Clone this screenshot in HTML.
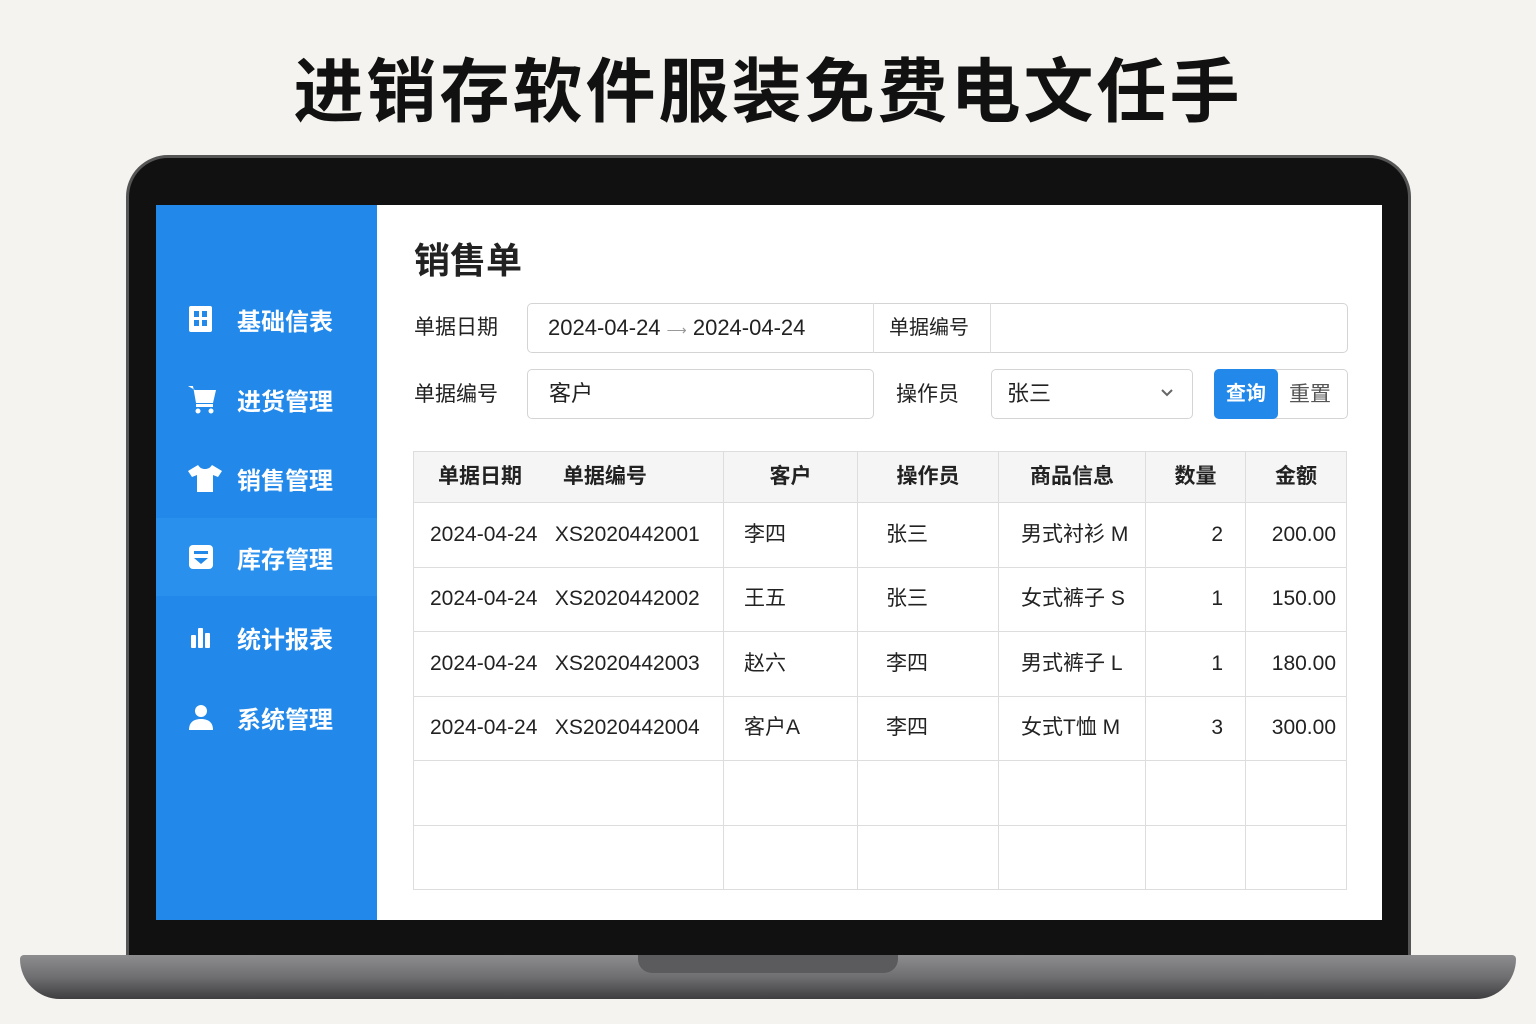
<!DOCTYPE html>
<html><head><meta charset="utf-8"><style>
*{margin:0;padding:0;box-sizing:border-box}
body{width:1536px;height:1024px;background:#f4f3ef;position:relative;overflow:hidden;font-family:"Liberation Sans","Noto Sans CJK SC",sans-serif;color:#222}
.title{position:absolute;top:36px;left:0;width:1536px;text-align:center;font-size:70px;font-weight:700;letter-spacing:3px;color:#111}
.bezel{position:absolute;left:126px;top:155px;width:1285px;height:810px;background:#111;border-radius:42px 42px 0 0;border:3px solid #555}
.screen{position:absolute;left:156px;top:205px;width:1226px;height:715px;background:#fff}
.side{position:absolute;left:0;top:0;width:221px;height:715px;background:#2289eb}
.nav{position:absolute;left:0;width:221px;height:78px;color:#fff;font-size:24px;font-weight:700;display:flex;align-items:center}
.nav svg{position:absolute;left:30px}
.nav span{position:absolute;left:81px}
.base{position:absolute;left:20px;top:955px;width:1496px;height:44px;background:linear-gradient(#8d8d8f,#6f6f72 50%,#3e3e40);border-radius:4px 4px 40px 40px}
.notch{position:absolute;left:638px;top:955px;width:260px;height:18px;background:#5b5b5e;border-radius:0 0 14px 14px}
.h1{position:absolute;left:258px;top:27px;font-size:36px;font-weight:700}
.lbl{position:absolute;font-size:21px;line-height:24px}
.box{position:absolute;border:1px solid #d4d4d4;border-radius:5px;background:#fff}
table{position:absolute;left:257px;top:246px;width:934px;border-collapse:collapse;font-size:21px}
td,th{border:1px solid #ddd;height:64.5px;line-height:24px;vertical-align:middle}
th{height:51px;background:#f5f5f5;font-weight:700;font-size:21px}
</style></head><body>
<div class="title">进销存软件服装免费电文任手</div>
<div class="bezel"></div>
<div class="base"></div><div class="notch"></div>
<div class="screen">
<div class="side">
 <div class="nav" style="top:75px"><svg width="30" height="30" viewBox="0 0 30 30"><rect x="3" y="2" width="23" height="26" rx="2" fill="#fff"/><rect x="8" y="7" width="5" height="6" fill="#2289eb"/><rect x="16" y="7" width="5" height="6" fill="#2289eb"/><rect x="8" y="16" width="5" height="6" fill="#2289eb"/><rect x="16" y="16" width="5" height="6" fill="#2289eb"/></svg><span>基础信表</span></div>
 <div class="nav" style="top:155px"><svg width="34" height="34" viewBox="0 0 34 34"><path d="M2 4h5l3 17h17l3-13H9" fill="#fff"/><rect x="10" y="22" width="17" height="3" fill="#fff"/><circle cx="12" cy="29" r="2.5" fill="#fff"/><circle cx="25" cy="29" r="2.5" fill="#fff"/></svg><span>进货管理</span></div>
 <div class="nav" style="top:234px"><svg width="38" height="30" viewBox="0 0 38 30"><path d="M12 2l-10 6 4 6 5-2v17h16V12l5 2 4-6-10-6c-2 3-4 4-7 4s-5-1-7-4z" fill="#fff"/></svg><span>销售管理</span></div>
 <div class="nav" style="top:313px;background:#2a90ee"><svg width="30" height="30" viewBox="0 0 30 30"><rect x="3" y="3" width="24" height="24" rx="4" fill="#fff"/><rect x="8" y="9" width="14" height="3" fill="#2289eb"/><path d="M8 16h14l-7 6z" fill="#2289eb"/></svg><span>库存管理</span></div>
 <div class="nav" style="top:393px"><svg width="30" height="30" viewBox="0 0 30 30"><rect x="5" y="13" width="5" height="13" rx="1" fill="#fff"/><rect x="12" y="6" width="5" height="20" rx="1" fill="#fff"/><rect x="19" y="11" width="5" height="15" rx="1" fill="#fff"/></svg><span>统计报表</span></div>
 <div class="nav" style="top:473px"><svg width="30" height="30" viewBox="0 0 30 30"><circle cx="15" cy="9" r="6" fill="#fff"/><path d="M3 28c0-8 5-11 12-11s12 3 12 11z" fill="#fff"/></svg><span>系统管理</span></div>
</div>
<div class="h1">销售单</div>
<div class="lbl" style="left:258px;top:111px">单据日期</div>
<div class="box" style="left:371px;top:98px;width:821px;height:50px"></div>
<div style="position:absolute;left:717px;top:98px;width:1px;height:50px;background:#ddd"></div>
<div style="position:absolute;left:834px;top:98px;width:1px;height:50px;background:#ddd"></div>
<div class="lbl" style="left:392px;top:111px;font-size:22px">2024-04-24 <span style="color:#999;font-size:14px">⟶</span> 2024-04-24</div>
<div class="lbl" style="left:733px;top:111px;font-size:20px">单据编号</div>
<div class="lbl" style="left:258px;top:178px">单据编号</div>
<div class="box" style="left:371px;top:164px;width:347px;height:50px"></div>
<div class="lbl" style="left:393px;top:177px;font-size:22px">客户</div>
<div class="lbl" style="left:740px;top:178px">操作员</div>
<div class="box" style="left:835px;top:164px;width:202px;height:50px"></div>
<div class="lbl" style="left:851px;top:177px;font-size:22px">张三</div>
<svg style="position:absolute;left:1004px;top:183px" width="14" height="10" viewBox="0 0 14 10"><path d="M2 2l5 5 5-5" stroke="#666" stroke-width="2" fill="none"/></svg>
<div class="box" style="left:1058px;top:164px;width:134px;height:50px"></div>
<div style="position:absolute;left:1058px;top:164px;width:64px;height:50px;background:#2289eb;border-radius:5px;color:#fff;font-weight:700;font-size:20px;text-align:center;line-height:50px">查询</div>
<div class="lbl" style="left:1133px;top:178px;color:#555">重置</div>
<table>
<tr><th style="width:310px;text-align:left;padding-left:24px">单据日期&nbsp;&nbsp;&nbsp;&nbsp;&nbsp;&nbsp;&nbsp;单据编号</th><th style="width:134px">客户</th><th style="width:141px">操作员</th><th style="width:147px">商品信息</th><th style="width:100px">数量</th><th>金额</th></tr>
<tr><td style="padding-left:16px">2024-04-24&nbsp;&nbsp;&nbsp;XS2020442001</td><td style="padding-left:20px">李四</td><td style="padding-left:28px">张三</td><td style="padding-left:22px">男式衬衫 M</td><td style="text-align:right;padding-right:22px">2</td><td style="text-align:right;padding-right:10px">200.00</td></tr>
<tr><td style="padding-left:16px">2024-04-24&nbsp;&nbsp;&nbsp;XS2020442002</td><td style="padding-left:20px">王五</td><td style="padding-left:28px">张三</td><td style="padding-left:22px">女式裤子 S</td><td style="text-align:right;padding-right:22px">1</td><td style="text-align:right;padding-right:10px">150.00</td></tr>
<tr><td style="padding-left:16px">2024-04-24&nbsp;&nbsp;&nbsp;XS2020442003</td><td style="padding-left:20px">赵六</td><td style="padding-left:28px">李四</td><td style="padding-left:22px">男式裤子 L</td><td style="text-align:right;padding-right:22px">1</td><td style="text-align:right;padding-right:10px">180.00</td></tr>
<tr><td style="padding-left:16px">2024-04-24&nbsp;&nbsp;&nbsp;XS2020442004</td><td style="padding-left:20px">客户A</td><td style="padding-left:28px">李四</td><td style="padding-left:22px">女式T恤 M</td><td style="text-align:right;padding-right:22px">3</td><td style="text-align:right;padding-right:10px">300.00</td></tr>
<tr><td></td><td></td><td></td><td></td><td></td><td></td></tr>
<tr><td></td><td></td><td></td><td></td><td></td><td></td></tr>
</table>
</div>
</body></html>
